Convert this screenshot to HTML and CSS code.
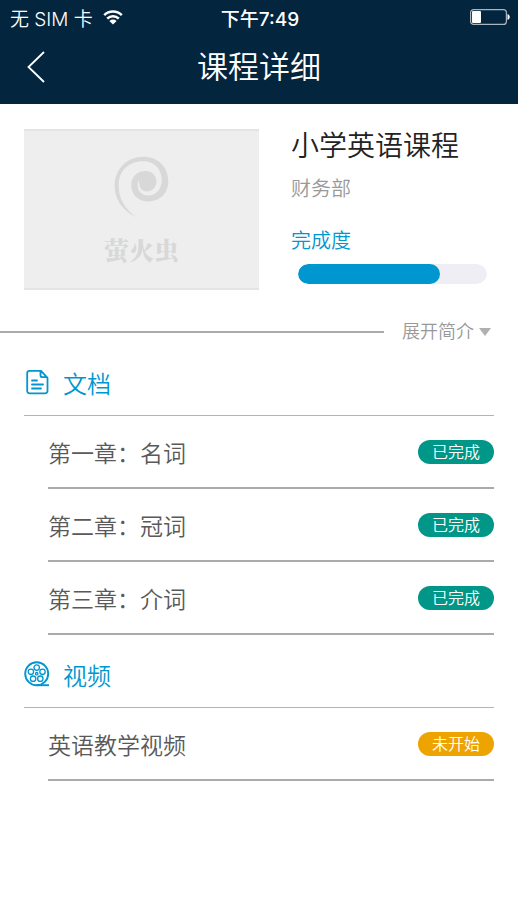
FILE: index.html
```html
<!DOCTYPE html>
<html lang="zh-CN">
<head>
<meta charset="utf-8">
<meta name="viewport" content="width=device-width, initial-scale=1">
<title>课程详细</title>
<link rel="stylesheet" href="styles.css">
</head>
<body>
<header class="top">
  <div class="status">
    <div class="carrier">
      <span>无 SIM 卡</span>
      <svg class="wifi" viewBox="0 0 20 15" aria-hidden="true">
        <path d="M1.2 5.2a12.6 12.6 0 0 1 17.6 0M4.2 8.6a8.3 8.3 0 0 1 11.6 0" fill="none" stroke="currentColor" stroke-width="2.5"/>
        <path d="M10 14.5 6.4 11a5.2 5.2 0 0 1 7.2 0z" fill="currentColor"/>
      </svg>
    </div>
    <time class="clock">下午7:49</time>
    <svg class="battery" viewBox="0 0 40 16" aria-hidden="true">
      <rect x=".6" y=".6" width="35.8" height="14.8" rx="3" fill="none" stroke="#a9b4be" stroke-width="1.2"/>
      <rect x="2" y="2" width="9" height="12" rx="1" fill="#fff"/>
      <path d="M37.500 5c3 1 3 5 0 6z" fill="#fff"/>
    </svg>
  </div>
  <nav class="nav">
    <button class="back" type="button" aria-label="返回">
      <svg viewBox="0 0 18 32" aria-hidden="true"><path d="M17 1 1.5 16 17 31" fill="none" stroke="currentColor" stroke-width="1.8"/></svg>
    </button>
    <h1 class="title">课程详细</h1>
  </nav>
</header>
<main>
  <section class="intro">
    <div class="cover">
      <svg class="spiral" viewBox="312 107 166 187" aria-hidden="true">
        <path fill="currentColor" d="M380 292C335 270 314 235 314 198C314 145 352 109 400 109C445 109 476 140 476 183C476 220 450 244 415 244C385 244 364 223 364 195C364 170 382 152 407 152C427 152 440 166 440 184C440 202 427 214 411 214C396 214 386 203 388 178C376 200 388 226 415 226C440 226 456 206 456 180C456 146 434 123 400 123C356 123 326 152 326 196C326 235 345 268 380 292Z"/>
      </svg>
      <span class="brand">萤火虫</span>
    </div>
    <div class="info">
      <h2 class="course">小学英语课程</h2>
      <p class="dept">财务部</p>
      <label class="label" for="done">完成度</label>
      <progress class="bar" id="done" value="75" max="100"></progress>
    </div>
  </section>
  <div class="expand">
    <button class="more" type="button">展开简介<svg viewBox="0 0 12 8" aria-hidden="true"><path d="M0 0h12L6 8z" fill="currentColor"/></svg></button>
  </div>
  <section>
    <h2 class="group">
      <svg viewBox="0 0 26 26" aria-hidden="true" fill="none" stroke="currentColor" stroke-width="1.8" stroke-linecap="round" stroke-linejoin="round">
        <path d="M5.5 1.900H17l6.500 7V22a2.300 2.300 0 0 1-2.300 2.300H5.500A2.300 2.300 0 0 1 3.200 22V4.200a2.300 2.300 0 0 1 2.300-2.300zM16.500 2.200v4a2 2 0 0 0 2 2h4.500M8 11.500h5M8 15.500h11M8 19.500h9"/>
      </svg>文档
    </h2>
    <ul class="list">
      <li><a class="item" href="#c1"><span>第一章：名词</span><span class="badge">已完成</span></a></li>
      <li><a class="item" href="#c2"><span>第二章：冠词</span><span class="badge">已完成</span></a></li>
      <li><a class="item" href="#c3"><span>第三章：介词</span><span class="badge">已完成</span></a></li>
    </ul>
  </section>
  <section>
    <h2 class="group">
      <svg viewBox="0 0 26 26" aria-hidden="true" fill="none" stroke="currentColor" stroke-width="1.3">
        <circle cx="12.7" cy="12.7" r="11.5" stroke-width="1.9"/>
        <circle cx="12.7" cy="6.6" r="2.7"/>
        <circle cx="18.5" cy="10.8" r="2.7"/>
        <circle cx="16.3" cy="17.7" r="2.7"/>
        <circle cx="9.1" cy="17.7" r="2.7"/>
        <circle cx="6.9" cy="10.8" r="2.7"/>
        <circle cx="12.7" cy="12.7" r="1.2"/>
        <path d="M12.7 24.2H25" stroke-width="1.9"/>
      </svg>视频
    </h2>
    <ul class="list">
      <li><a class="item" href="#v1"><span>英语教学视频</span><span class="badge pending">未开始</span></a></li>
    </ul>
  </section>
</main>
</body>
</html>
```
FILE: styles.css
```css
* {
  box-sizing: border-box;
  margin: 0;
  padding: 0;
}

body {
  background: #fff;
  color: #595959;
  font-family: Inter, "Noto Sans CJK SC", sans-serif;
  font-weight: 350;
}

button {
  border: 0;
  background: none;
  color: inherit;
  font: inherit;
}

.top {
  background: #03253e;
  color: #fff;
}

.status {
  display: grid;
  grid-template-columns: 1fr auto 1fr;
  align-items: center;
  height: 34px;
  padding: 0 8px 0 10px;
  font-size: 19px;
}

.carrier {
  display: flex;
  align-items: center;
  gap: 10px;
}

.wifi {
  width: 20px;
  height: 15px;
}

.clock {
  font-weight: 500;
}

.battery {
  justify-self: end;
  width: 40px;
  height: 16px;
}

.nav {
  display: grid;
  grid-template-columns: 1fr auto 1fr;
  align-items: center;
  height: 70px;
  padding: 0 24px 4px;
}

.back {
  justify-self: start;
  height: 32px;
  padding: 0 3px;
}

.back svg {
  display: block;
  width: 18px;
  height: 32px;
}

.title {
  font-size: 31px;
  font-weight: 350;
  line-height: 40px;
}

.intro {
  display: flex;
  gap: 32px;
  padding: 25px 24px 0;
}

.cover {
  display: flex;
  flex: 1;
  flex-direction: column;
  align-items: center;
  gap: 13px;
  height: 161px;
  padding-top: 25px;
  border: solid #e4e4e4;
  border-width: 2px 0;
  background: #eee;
  color: #d8d8d8;
}

.spiral {
  width: 55px;
  height: 62px;
}

.brand {
  font-family: "Noto Serif CJK SC", "Noto Sans CJK SC", serif;
  font-size: 25px;
  font-weight: 900;
  line-height: 36px;
}

.info {
  display: flex;
  flex: 1;
  flex-direction: column;
  max-width: 203px;
}

.course {
  color: #222;
  font-size: 28px;
  font-weight: 350;
  line-height: 34px;
  white-space: nowrap;
}

.dept {
  margin-top: 12px;
  color: #999;
  font-size: 20px;
  line-height: 28px;
}

.label {
  margin-top: 24px;
  color: #0096d0;
  font-size: 20px;
  line-height: 28px;
}

.bar {
  width: auto;
  height: 20px;
  margin: 9px 7px 0;
  border: 0;
  border-radius: 10px;
  appearance: none;
  overflow: hidden;
}

.bar::-webkit-progress-bar {
  border-radius: 10px;
  background: #eeeef4;
}

.bar::-webkit-progress-value {
  border-radius: 10px;
  background: #0096d0;
}

.expand {
  display: flex;
  align-items: center;
  gap: 18px;
  margin-top: 24px;
  padding-right: 27px;
}

.expand::before {
  flex: 1;
  height: 2px;
  background: #aaa;
  content: "";
}

.more {
  display: flex;
  align-items: center;
  gap: 5px;
  color: #999;
  font-size: 18px;
  line-height: 36px;
}

.more svg {
  width: 12px;
  height: 8px;
  color: #b0b0b0;
}

.group {
  display: flex;
  align-items: center;
  gap: 13px;
  height: 73px;
  margin: 0 24px;
  padding-top: 6px;
  border-bottom: 1px solid #b4b4b4;
  color: #0096d0;
  font-size: 24px;
  font-weight: 350;
}

.expand + section {
  margin-top: -7px;
}

.group svg {
  width: 26px;
  height: 26px;
}

.list {
  padding: 0 24px 0 48px;
  list-style: none;
}

.item {
  display: flex;
  align-items: center;
  justify-content: space-between;
  height: 73px;
  border-bottom: 2px solid #aaa;
  color: inherit;
  font-size: 23px;
  text-decoration: none;
}

.badge {
  width: 76px;
  border-radius: 12px;
  background: #009688;
  color: #fff;
  font-size: 16px;
  line-height: 24px;
  text-align: center;
}

.pending {
  background: #eea400;
}
```
